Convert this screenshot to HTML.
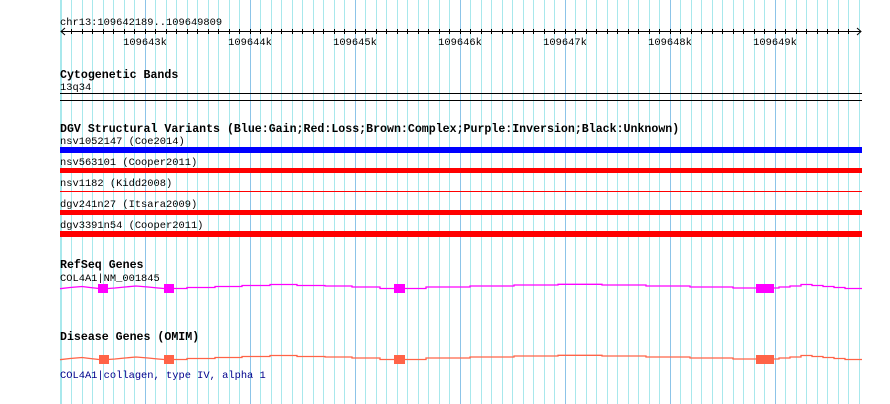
<!DOCTYPE html>
<html><head><meta charset="utf-8"><style>
html,body{margin:0;padding:0;background:#fff;}
svg{display:block;}
text{font-family:"Liberation Mono",monospace;font-size:10.4px;fill:#000;}
.b{font-weight:bold;font-size:11.6px;}
</style></head><body>
<svg width="890" height="404" viewBox="0 0 890 404" xmlns="http://www.w3.org/2000/svg">
<rect width="890" height="404" fill="#fff"/>
<path stroke="#a8e8ec" stroke-width="1" d="M60.5 0V404M61.5 0V404M71.5 0V404M82.5 0V404M92.5 0V404M103.5 0V404M113.5 0V404M124.5 0V404M134.5 0V404M155.5 0V404M166.5 0V404M176.5 0V404M187.5 0V404M197.5 0V404M208.5 0V404M218.5 0V404M229.5 0V404M239.5 0V404M260.5 0V404M271.5 0V404M281.5 0V404M292.5 0V404M302.5 0V404M313.5 0V404M323.5 0V404M334.5 0V404M344.5 0V404M365.5 0V404M376.5 0V404M386.5 0V404M397.5 0V404M407.5 0V404M418.5 0V404M428.5 0V404M439.5 0V404M449.5 0V404M470.5 0V404M481.5 0V404M491.5 0V404M502.5 0V404M512.5 0V404M523.5 0V404M533.5 0V404M544.5 0V404M554.5 0V404M575.5 0V404M586.5 0V404M596.5 0V404M607.5 0V404M617.5 0V404M628.5 0V404M638.5 0V404M649.5 0V404M659.5 0V404M680.5 0V404M691.5 0V404M701.5 0V404M712.5 0V404M722.5 0V404M733.5 0V404M743.5 0V404M754.5 0V404M764.5 0V404M785.5 0V404M796.5 0V404M806.5 0V404M817.5 0V404M827.5 0V404M838.5 0V404M848.5 0V404M859.5 0V404"/>
<path stroke="#8cc4e8" stroke-width="1" d="M145.5 0V404M250.5 0V404M355.5 0V404M460.5 0V404M565.5 0V404M670.5 0V404M775.5 0V404"/>
<text x="60" y="25">chr13:109642189..109649809</text>
<line x1="61" y1="31.5" x2="861" y2="31.5" stroke="#000"/>
<path d="M65 28 L61 31.5 L65 35 M857 28 L861 31.5 L857 35" stroke="#000" fill="none"/>
<path stroke="#000" stroke-width="1" d="M71.5 29V34M82.5 29V34M92.5 29V34M103.5 29V34M113.5 29V34M124.5 29V34M134.5 29V34M145.5 29V34M155.5 29V34M166.5 29V34M176.5 29V34M187.5 29V34M197.5 29V34M208.5 29V34M218.5 29V34M229.5 29V34M239.5 29V34M250.5 29V34M260.5 29V34M271.5 29V34M281.5 29V34M292.5 29V34M302.5 29V34M313.5 29V34M323.5 29V34M334.5 29V34M344.5 29V34M355.5 29V34M365.5 29V34M376.5 29V34M386.5 29V34M397.5 29V34M407.5 29V34M418.5 29V34M428.5 29V34M439.5 29V34M449.5 29V34M460.5 29V34M470.5 29V34M481.5 29V34M491.5 29V34M502.5 29V34M512.5 29V34M523.5 29V34M533.5 29V34M544.5 29V34M554.5 29V34M565.5 29V34M575.5 29V34M586.5 29V34M596.5 29V34M607.5 29V34M617.5 29V34M628.5 29V34M638.5 29V34M649.5 29V34M659.5 29V34M670.5 29V34M680.5 29V34M691.5 29V34M701.5 29V34M712.5 29V34M722.5 29V34M733.5 29V34M743.5 29V34M754.5 29V34M764.5 29V34M775.5 29V34M785.5 29V34M796.5 29V34M806.5 29V34M817.5 29V34M827.5 29V34M838.5 29V34M848.5 29V34"/>
<text x="145" y="45" text-anchor="middle">109643k</text>
<text x="250" y="45" text-anchor="middle">109644k</text>
<text x="355" y="45" text-anchor="middle">109645k</text>
<text x="460" y="45" text-anchor="middle">109646k</text>
<text x="565" y="45" text-anchor="middle">109647k</text>
<text x="670" y="45" text-anchor="middle">109648k</text>
<text x="775" y="45" text-anchor="middle">109649k</text>

<text class="b" x="60" y="78">Cytogenetic Bands</text>
<text x="60" y="90">13q34</text>
<rect x="60" y="93" width="802" height="1" fill="#000"/>
<rect x="60" y="100" width="802" height="1" fill="#000"/>

<text class="b" x="60" y="132">DGV Structural Variants (Blue:Gain;Red:Loss;Brown:Complex;Purple:Inversion;Black:Unknown)</text>
<text x="60" y="144">nsv1052147 (Coe2014)</text>
<rect x="60" y="147" width="802" height="6" fill="#0000ff"/>
<text x="60" y="165">nsv563101 (Cooper2011)</text>
<rect x="60" y="168" width="802" height="5" fill="#ff0000"/>
<text x="60" y="186">nsv1182 (Kidd2008)</text>
<rect x="60" y="191" width="802" height="1" fill="#ff0000"/>
<text x="60" y="207">dgv241n27 (Itsara2009)</text>
<rect x="60" y="210" width="802" height="5" fill="#ff0000"/>
<text x="60" y="228">dgv3391n54 (Cooper2011)</text>
<rect x="60" y="231" width="802" height="6" fill="#ff0000"/>

<text class="b" x="60" y="268">RefSeq Genes</text>
<text x="60" y="281">COL4A1|NM_001845</text>
<g fill="none" stroke="#ff00ff" stroke-width="1.3">
<path d="M60 288.7 L70 287.5 L82 286.5 L90 287.5 L99 288.5 M108 288.5 L115 288 L125 287 L136 286 L148 287 L158 288 L164 288.5 M174 288.5 H187 V287.5 H215 V286.5 H242 V285.5 H270 V284.5 H297 V285.5 H325 V286 H352 V287 H380 V288.5 H394 M404 288.5 H426 V287 H470 V286 H514 V285 H558 V284.3 H602 V285 H646 V286 H690 V287 H733 V288 H756 M774 288 H779 V287 H790 V286 H801 V284.5 H812 V285.5 H823 V286.5 H834 V287.5 H845 V288.5 H862"/>
</g>
<g fill="#ff00ff">
<rect x="98" y="284" width="10" height="9"/>
<rect x="164" y="284" width="10" height="9"/>
<rect x="394" y="284" width="11" height="9"/>
<rect x="756" y="284" width="18" height="9"/>
</g>

<text class="b" x="60" y="340">Disease Genes (OMIM)</text>
<g transform="translate(0,71)" fill="none" stroke="#ff6347" stroke-width="1.3">
<path d="M60 288.7 L70 287.5 L82 286.5 L90 287.5 L99 288.5 M108 288.5 L115 288 L125 287 L136 286 L148 287 L158 288 L164 288.5 M174 288.5 H187 V287.5 H215 V286.5 H242 V285.5 H270 V284.5 H297 V285.5 H325 V286 H352 V287 H380 V288.5 H394 M404 288.5 H426 V287 H470 V286 H514 V285 H558 V284.3 H602 V285 H646 V286 H690 V287 H733 V288 H756 M774 288 H779 V287 H790 V286 H801 V284.5 H812 V285.5 H823 V286.5 H834 V287.5 H845 V288.5 H862"/>
</g>
<g fill="#ff6347">
<rect x="99" y="355" width="10" height="9"/>
<rect x="164" y="355" width="10" height="9"/>
<rect x="394" y="355" width="11" height="9"/>
<rect x="756" y="355" width="18" height="9"/>
</g>
<text x="60" y="378" style="fill:#00008b">COL4A1|collagen, type IV, alpha 1</text>
</svg>
</body></html>
